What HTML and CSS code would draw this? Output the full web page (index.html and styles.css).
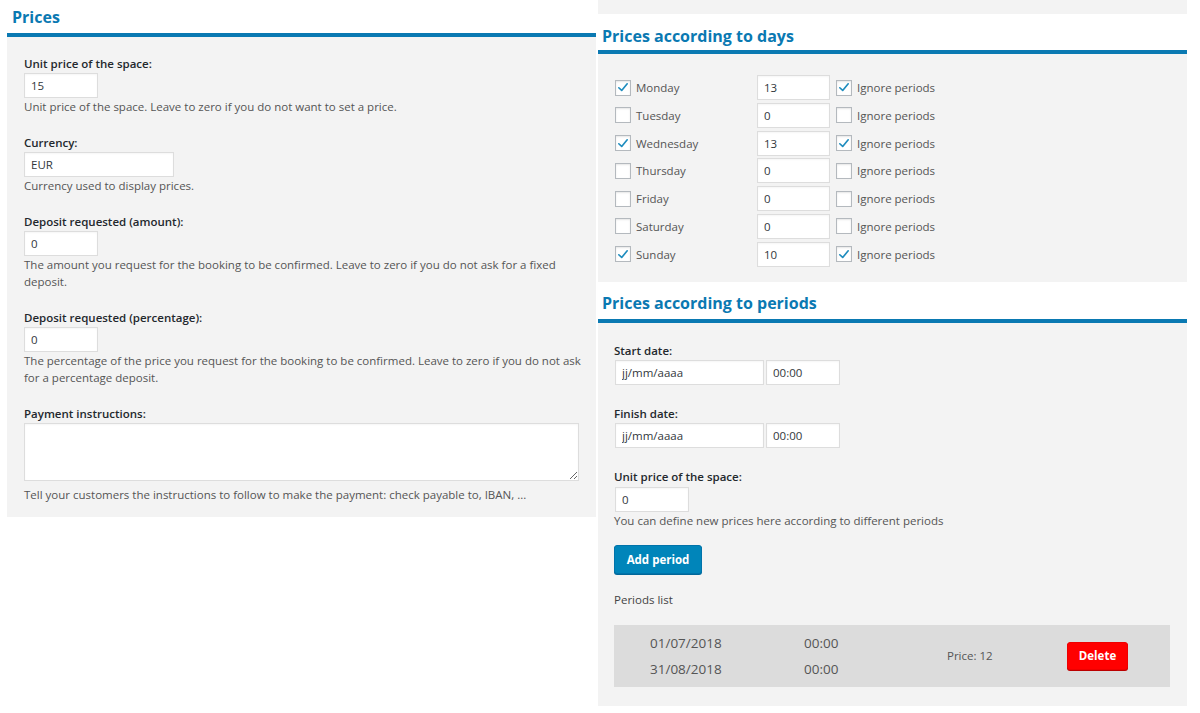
FILE: index.html
```html
<!DOCTYPE html>
<html lang="en">
<head>
  <meta charset="UTF-8" />
  <title>Prices</title>
  <link rel="stylesheet" href="styles.css">
</head>
<body>
  <div class="page">
    <section class="col col-left">
      <h2 class="box-title">Prices</h2>
      <div class="box-body">
        <div class="field">
          <label>Unit price of the space:</label>
          <input class="inp inp-small" type="text" value="15" />
          <p class="desc">Unit price of the space. Leave to zero if you do not want to set a price.</p>
        </div>
        <div class="field">
          <label>Currency:</label>
          <input class="inp inp-mid" type="text" value="EUR" />
          <p class="desc">Currency used to display prices.</p>
        </div>
        <div class="field">
          <label>Deposit requested (amount):</label>
          <input class="inp inp-small" type="text" value="0" />
          <p class="desc">The amount you request for the booking to be confirmed. Leave to zero if you do not ask for a fixed deposit.</p>
        </div>
        <div class="field">
          <label>Deposit requested (percentage):</label>
          <input class="inp inp-small" type="text" value="0" />
          <p class="desc">The percentage of the price you request for the booking to be confirmed. Leave to zero if you do not ask for a percentage deposit.</p>
        </div>
        <div class="field">
          <label>Payment instructions:</label>
          <textarea class="inp area"></textarea>
          <p class="desc">Tell your customers the instructions to follow to make the payment: check payable to, IBAN, ...</p>
        </div>
      </div>
    </section>

    <div class="col col-right">
      <div class="top-strip"></div>

      <section>
        <h2 class="box-title title-days">Prices according to days</h2>
        <div class="box-body days" id="days"></div>
      </section>

      <section>
        <h2 class="box-title title-periods">Prices according to periods</h2>
        <div class="box-body periods">
          <div class="field">
            <label>Start date:</label>
            <div class="date-row">
              <input class="inp inp-date" type="text" value="jj/mm/aaaa" />
              <input class="inp inp-small" type="text" value="00:00" />
            </div>
          </div>
          <div class="field">
            <label>Finish date:</label>
            <div class="date-row">
              <input class="inp inp-date" type="text" value="jj/mm/aaaa" />
              <input class="inp inp-small" type="text" value="00:00" />
            </div>
          </div>
          <div class="field price-field">
            <label>Unit price of the space:</label>
            <input class="inp inp-small" type="text" value="0" />
            <p class="desc">You can define new prices here according to different periods</p>
          </div>
          <button class="btn-add">Add period</button>
          <div class="list-title">Periods list</div>
          <div class="period">
            <div class="p-dates">
              <div>01/07/2018</div>
              <div>31/08/2018</div>
            </div>
            <div class="p-times">
              <div>00:00</div>
              <div>00:00</div>
            </div>
            <div class="p-price">Price: 12</div>
            <button class="btn-del">Delete</button>
          </div>
        </div>
      </section>
    </div>
  </div>

  <script>
    const days = [
      { name: "Monday", price: 13, on: true },
      { name: "Tuesday", price: 0, on: false },
      { name: "Wednesday", price: 13, on: true },
      { name: "Thursday", price: 0, on: false },
      { name: "Friday", price: 0, on: false },
      { name: "Saturday", price: 0, on: false },
      { name: "Sunday", price: 10, on: true }
    ];

    const tick = '<svg viewBox="0 0 16 16" width="15" height="15"><path d="M3.2 8.3 L6.5 11.4 L12.8 3.8" fill="none" stroke="#1e8cbe" stroke-width="1.9" stroke-linecap="round" stroke-linejoin="round"/></svg>';

    const box = document.getElementById("days");
    for (const d of days) {
      const row = document.createElement("div");
      row.className = "day-row";
      row.innerHTML =
        '<span class="cb">' + (d.on ? tick : "") + '</span>' +
        '<span class="day-name">' + d.name + '</span>' +
        '<input class="inp inp-small" type="text" value="' + d.price + '" />' +
        '<span class="cb">' + (d.on ? tick : "") + '</span>' +
        '<span class="day-ignore">Ignore periods</span>';
      box.appendChild(row);
    }
  </script>
</body>
</html>
```

FILE: styles.css
```css
* {
  box-sizing: border-box;
  margin: 0;
  padding: 0;
}

body {
  background: #fff;
  color: #444;
  font-family: "Open Sans", "Noto Sans", sans-serif;
  font-size: 11.5px;
  line-height: 17px;
}

.page {
  display: flex;
  align-items: flex-start;
}

.col {
  width: 589px;
}

.col-left {
  margin-left: 7px;
}

.col-right {
  margin-left: 2px;
}

.top-strip {
  height: 14px;
  background: #f3f3f3;
}

.box-title {
  font-size: 16px;
  font-weight: 700;
  line-height: 20px;
  color: #0a79b2;
  padding: 7px 5px 6px;
  border-bottom: 4px solid #0a79b2;
}

.title-days {
  padding: 12px 4px 4px;
}

.title-periods {
  padding: 11px 4px 6px;
}

.box-body {
  background: #f3f3f3;
  padding: 18px 17px 14px;
}

.field {
  margin-bottom: 19px;
}

.field:last-child {
  margin-bottom: 0;
}

.field label {
  display: block;
  font-weight: 600;
  color: #23282d;
  margin-bottom: 1px;
}

.desc {
  color: #555;
  width: 568px;
}

.inp {
  display: block;
  height: 25px;
  border: 1px solid #ddd;
  background: #fff;
  color: #32373c;
  font-family: inherit;
  font-size: 11.5px;
  padding: 0 6px;
  box-shadow: inset 0 1px 2px rgba(0, 0, 0, 0.04);
}

.inp-small {
  width: 74px;
}

.inp-mid {
  width: 150px;
}

.inp-date {
  width: 149px;
}

.area {
  width: 555px;
  height: 58px;
  margin-bottom: 5px;
  resize: vertical;
}

/* days */

.days {
  padding: 21px 17px 15px;
}

.day-row {
  display: flex;
  align-items: center;
  height: 25px;
  margin-bottom: 2.8px;
}

.day-row:last-child {
  margin-bottom: 0;
}

.cb {
  width: 16px;
  height: 16px;
  border: 1px solid #b4b9be;
  background: #fff;
  box-shadow: inset 0 1px 2px rgba(0, 0, 0, 0.1);
  display: flex;
  align-items: center;
  justify-content: center;
  flex-shrink: 0;
}

.day-name {
  width: 121px;
  margin-left: 5px;
  color: #555;
}

.day-row .inp {
  width: 73px;
  margin-right: 6px;
}

.day-ignore {
  margin-left: 5px;
  color: #555;
}

/* periods */

.periods {
  padding: 19px 17px 19px 16px;
}

.periods .field {
  margin-bottom: 20px;
}

.periods .price-field {
  margin-bottom: 0;
}

.price-field label {
  margin-bottom: 2px;
}

.date-row {
  display: flex;
  gap: 2px;
  padding-left: 1px;
}

.periods .field > .inp {
  margin-left: 1px;
}

.btn-add {
  display: block;
  margin-top: 16px;
  width: 88px;
  height: 29px;
  background: #0085ba;
  border: 1px solid #0073aa;
  border-radius: 3px;
  box-shadow: 0 1px 0 #006799;
  color: #fff;
  font-family: inherit;
  font-size: 11.5px;
  font-weight: 700;
}

.list-title {
  margin-top: 17px;
  color: #444;
}

.period {
  margin-top: 17px;
  height: 62px;
  background: #dcdcdc;
  display: flex;
  align-items: center;
  padding-left: 36px;
  color: #555;
}

.p-dates,
.p-times {
  font-size: 13.5px;
  line-height: 26px;
}

.p-dates {
  width: 154px;
}

.p-times {
  width: 143px;
}

.p-price {
  width: 120px;
}

.btn-del {
  width: 61px;
  height: 28px;
  background: #f00;
  border: 1px solid #e00;
  border-radius: 3px;
  box-shadow: 0 1px 0 #b00;
  color: #fff;
  font-family: inherit;
  font-size: 11.5px;
  font-weight: 700;
}
```
